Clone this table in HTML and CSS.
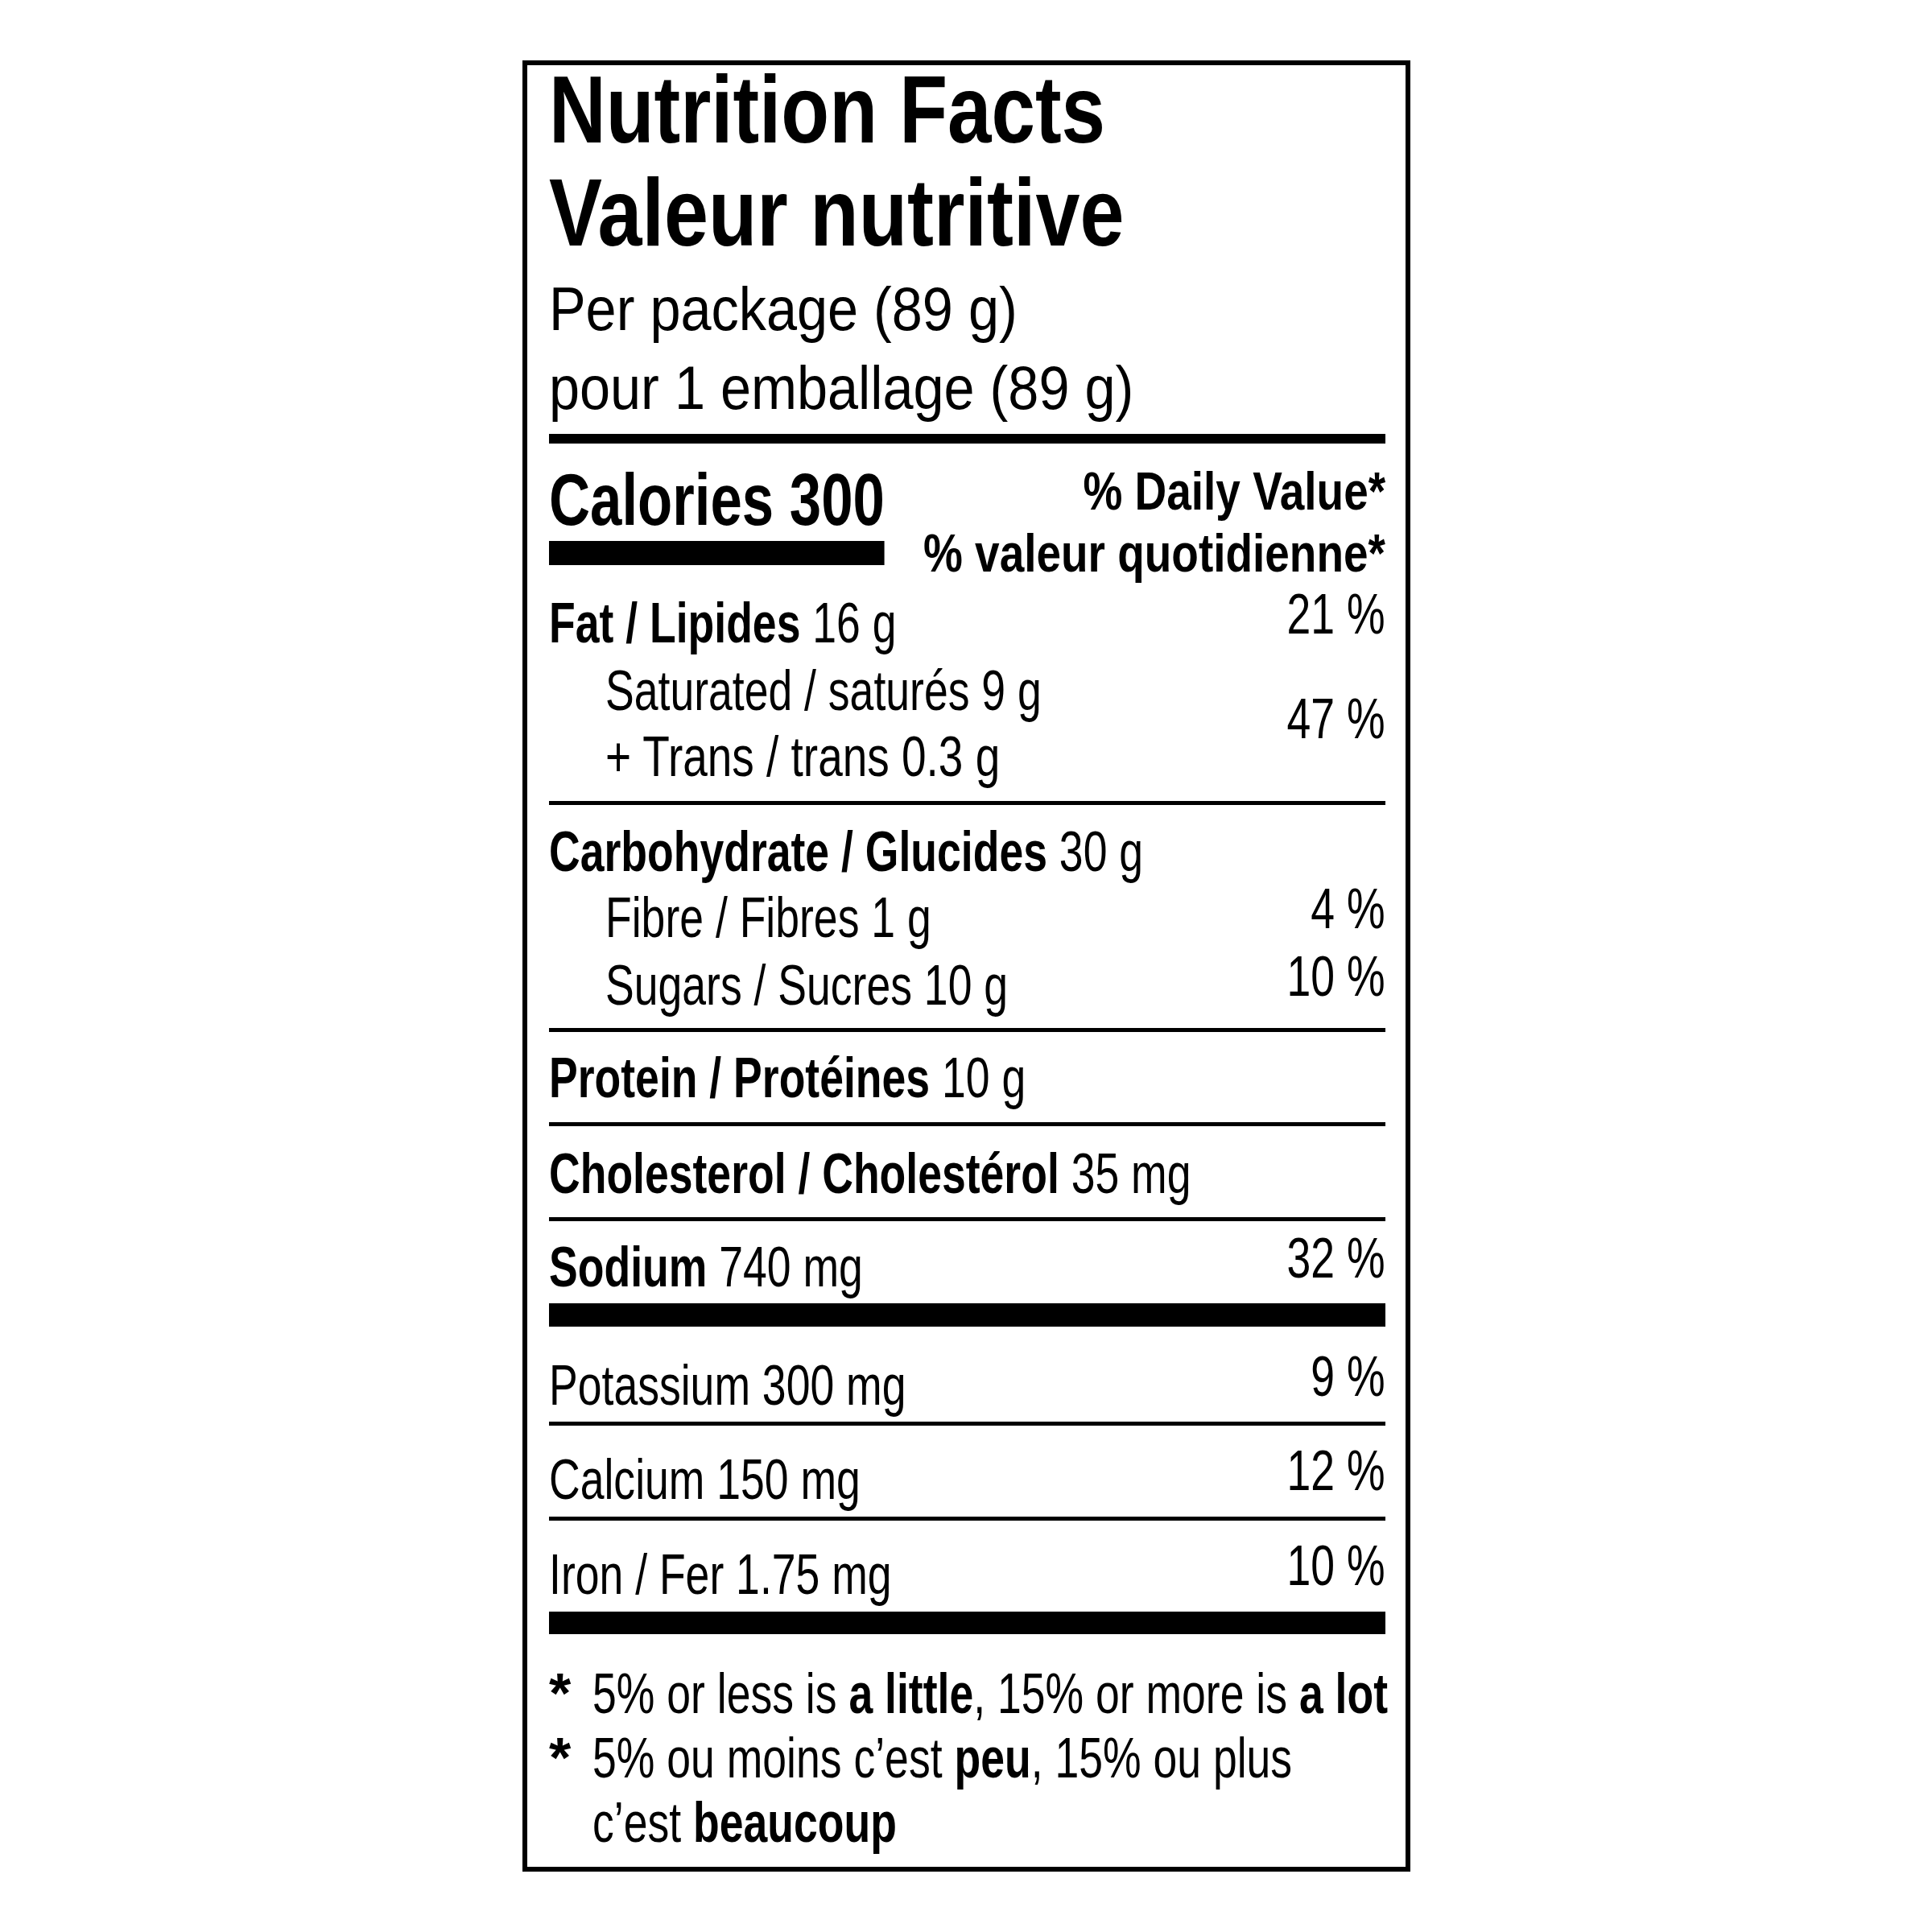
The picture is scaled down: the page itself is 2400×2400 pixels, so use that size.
FILE: index.html
```html
<!DOCTYPE html>
<html lang="en">
<head>
<meta charset="utf-8">
<title>Nutrition Facts / Valeur nutritive</title>
<link rel="stylesheet" href="styles.css">
</head>
<body>
<div class="label">
  <header class="head">
    <h1 class="title"><span class="title-line">Nutrition Facts</span><span class="title-line title-line-2">Valeur nutritive</span></h1>
    <p class="serving"><span class="serving-line">Per package (89 g)</span><span class="serving-line">pour 1 emballage (89 g)</span></p>
  </header>
  <div class="rule rule-thick"></div>

  <div class="cal-row">
    <div class="cal">
      <div class="cal-text">Calories 300</div>
      <div class="cal-bar"></div>
    </div>
    <div class="dv">
      <div class="dv-line">% Daily Value*</div>
      <div class="dv-line">% valeur quotidienne*</div>
    </div>
  </div>

  <section class="sec sec-fat">
    <div class="row"><span class="lbl"><b>Fat / Lipides</b> 16 g</span><span class="pct">21 %</span></div>
    <div class="row row-group">
      <div class="sub-lines">
        <div class="lbl sub">Saturated / saturés 9 g</div>
        <div class="lbl sub lbl-wide">+ Trans / trans 0.3 g</div>
      </div>
      <span class="pct pct-mid">47 %</span>
    </div>
  </section>
  <div class="rule"></div>

  <section class="sec sec-carb">
    <div class="row"><span class="lbl"><b>Carbohydrate / Glucides</b> 30 g</span></div>
    <div class="row"><span class="lbl sub">Fibre / Fibres 1 g</span><span class="pct">4 %</span></div>
    <div class="row row-gap"><span class="lbl sub">Sugars / Sucres 10 g</span><span class="pct">10 %</span></div>
  </section>
  <div class="rule"></div>

  <section class="sec sec-protein">
    <div class="row"><span class="lbl"><b>Protein / Protéines</b> 10 g</span></div>
  </section>
  <div class="rule"></div>

  <section class="sec sec-chol">
    <div class="row"><span class="lbl"><b>Cholesterol / Cholestérol</b> 35 mg</span></div>
  </section>
  <div class="rule"></div>

  <section class="sec sec-sodium">
    <div class="row"><span class="lbl"><b>Sodium</b> 740 mg</span><span class="pct">32 %</span></div>
  </section>
  <div class="rule rule-bar"></div>

  <section class="sec sec-potassium">
    <div class="row"><span class="lbl">Potassium 300 mg</span><span class="pct">9 %</span></div>
  </section>
  <div class="rule"></div>

  <section class="sec sec-calcium">
    <div class="row"><span class="lbl">Calcium 150 mg</span><span class="pct">12 %</span></div>
  </section>
  <div class="rule"></div>

  <section class="sec sec-iron">
    <div class="row"><span class="lbl">Iron / Fer 1.75 mg</span><span class="pct">10 %</span></div>
  </section>
  <div class="rule rule-bar rule-bar-last"></div>

  <footer class="foot">
    <span class="star">*</span>
    <span class="foot-text">5% or less is <b>a little</b>, 15% or more is <b>a lot</b></span>
    <span class="star">*</span>
    <span class="foot-text">5% ou moins c’est <b>peu</b>, 15% ou plus<br>c’est <b>beaucoup</b></span>
  </footer>
</div>
</body>
</html>
```

FILE: styles.css
```css
html, body {
  margin: 0;
  padding: 0;
  background: #ffffff;
}

body {
  color: #000000;
  font-family: "Liberation Sans Narrow", "Liberation Sans", Arial, sans-serif;
}

.label {
  box-sizing: border-box;
  width: 1103px;
  margin: 75px 0 0 649px;
  border: 6px solid #000000;
  padding: 0 25px 15px 27px;
}

/* Condensed type: the label face is a condensed grotesque */
.title-line,
.serving-line,
.cal,
.lbl,
.foot-text {
  transform-origin: left center;
}

.pct,
.dv-line {
  transform-origin: right center;
}

/* Header */
.title {
  margin: 0;
  font-size: 118px;
  font-weight: 700;
  line-height: 110px;
}

.title-line {
  display: block;
  white-space: nowrap;
  transform: scaleX(0.83);
}

.title-line-2 {
  margin-top: 18px;
  transform: scaleX(0.838);
}

.serving {
  margin: 16px 0 0 0;
  font-size: 76px;
  font-weight: 400;
  line-height: 98px;
}

.serving-line {
  display: block;
  white-space: nowrap;
  transform: scaleX(0.9);
}

/* Rules */
.rule {
  height: 5px;
  background: #000000;
}

.rule-thick {
  height: 12px;
  margin-top: 8px;
}

.rule-bar {
  height: 29px;
}

.rule-bar-last {
  height: 28px;
}

/* Calories */
.cal-row {
  display: flex;
  align-items: flex-start;
  padding-top: 20px;
}

.cal {
  display: inline-flex;
  flex-direction: column;
  flex: 0 0 auto;
  margin-top: 5px;
  transform: scaleX(0.786);
}

.cal-text {
  font-size: 90px;
  font-weight: 700;
  line-height: 90px;
  white-space: nowrap;
}

.cal-bar {
  height: 30px;
  margin-top: 6px;
  background: #000000;
}

.dv {
  flex: 1 1 0;
  min-width: 0;
  display: flex;
  flex-direction: column;
  align-items: flex-end;
  font-size: 67px;
  font-weight: 700;
  line-height: 77px;
}

.dv-line {
  white-space: nowrap;
  transform: scaleX(0.82);
}

/* Nutrient rows */
.sec {
  font-size: 70px;
  line-height: 82px;
}

.row {
  display: flex;
  justify-content: space-between;
  align-items: flex-start;
}

.lbl {
  display: block;
  white-space: nowrap;
  transform: scaleX(0.765);
}

.lbl-wide {
  transform: scaleX(0.785);
}

.lbl b {
  font-weight: 700;
}

.sub {
  margin-left: 70px;
}

.pct {
  display: block;
  line-height: 60px;
  white-space: nowrap;
  transform: scaleX(0.765);
}

.row-group {
  margin-top: 2px;
}

.pct-mid {
  margin-top: 46px;
}

.row-gap {
  margin-top: 2px;
}

.sec-fat {
  padding: 8px 0 14px 0;
}

.sec-carb {
  padding: 17px 0 12px 0;
}

.sec-protein {
  padding: 16px 0 14px 0;
}

.sec-chol {
  padding: 18px 0 13px 0;
}

.sec-sodium {
  padding: 16px 0 4px 0;
}

.sec-potassium {
  padding: 32px 0 4px 0;
}

.sec-calcium {
  padding: 26px 0 5px 0;
}

.sec-iron {
  padding: 26px 0 5px 0;
}

/* Footnote */
.foot {
  display: grid;
  grid-template-columns: 54px minmax(0, 1fr);
  margin-top: 34px;
  font-size: 70px;
  line-height: 80px;
}

.star {
  font-weight: 700;
  font-size: 70px;
  line-height: 80px;
}

.foot-text {
  display: block;
  white-space: nowrap;
  transform: scaleX(0.765);
}

.foot-text b {
  font-weight: 700;
}
```
